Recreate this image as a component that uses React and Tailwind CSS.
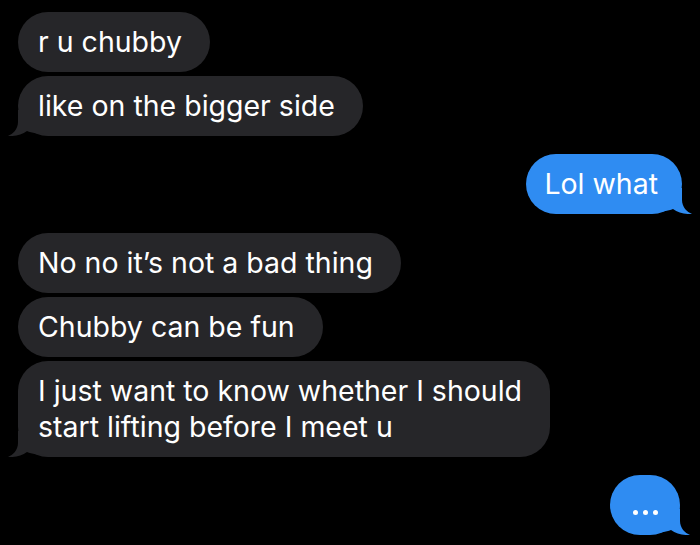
import React from "react";

const GRAY = "#262629";
const BLUE = "#2f8cf2";

function Tail({ side, color }) {
  const left = side === "left";
  return (
    <svg
      width="40"
      height="26"
      viewBox="0 0 40 26"
      className={`absolute bottom-0 ${left ? "left-[-10px]" : "right-[-10px] scale-x-[-1]"}`}
    >
      <path
        d="M10 0 L10 12 C10 19 5 24 0 26 C7 26.5 14 24.5 19 21 C24 23 30 24 40 24 L40 0 Z"
        fill={color}
      />
    </svg>
  );
}

function Bubble({ children, tail, mine }) {
  const color = mine ? BLUE : GRAY;
  return (
    <div
      className={`relative rounded-[30px] py-[12px] text-[28.5px] leading-[36px] text-white ${
        mine ? "self-end bg-[#2f8cf2] pl-[18px] pr-[24px]" : "self-start bg-[#262629] pl-5 pr-[28px]"
      }`}
    >
      {tail && <Tail side={mine ? "right" : "left"} color={color} />}
      <span className="relative">{children}</span>
    </div>
  );
}

export default function App() {
  return (
    <div
      className="w-[700px] h-[545px] overflow-hidden bg-black px-[18px] pt-[12px] flex flex-col"
      style={{ fontFamily: "Inter, 'Liberation Sans', sans-serif" }}
    >
      <div className="flex flex-col gap-[4px]">
        <Bubble>r u chubby</Bubble>
        <Bubble tail>like on the bigger side</Bubble>
      </div>

      <div className="flex flex-col mt-[18px]">
        <Bubble mine tail>Lol what</Bubble>
      </div>

      <div className="flex flex-col gap-[4px] mt-[19px]">
        <Bubble>No no it’s not a bad thing</Bubble>
        <Bubble>Chubby can be fun</Bubble>
        <Bubble tail>
          I just want to know whether I should
          <br />
          start lifting before I meet u
        </Bubble>
      </div>

      <div className="flex flex-col mt-[18px]">
        <div className="relative self-end w-[70px] h-[60px] rounded-[30px] bg-[#2f8cf2] flex items-center justify-center gap-[5px] pt-[14px] mr-[2px]">
          <Tail side="right" color={BLUE} />
          <span className="relative w-[5px] h-[5px] rounded-full bg-white" />
          <span className="relative w-[5px] h-[5px] rounded-full bg-white" />
          <span className="relative w-[5px] h-[5px] rounded-full bg-white" />
        </div>
      </div>
    </div>
  );
}
